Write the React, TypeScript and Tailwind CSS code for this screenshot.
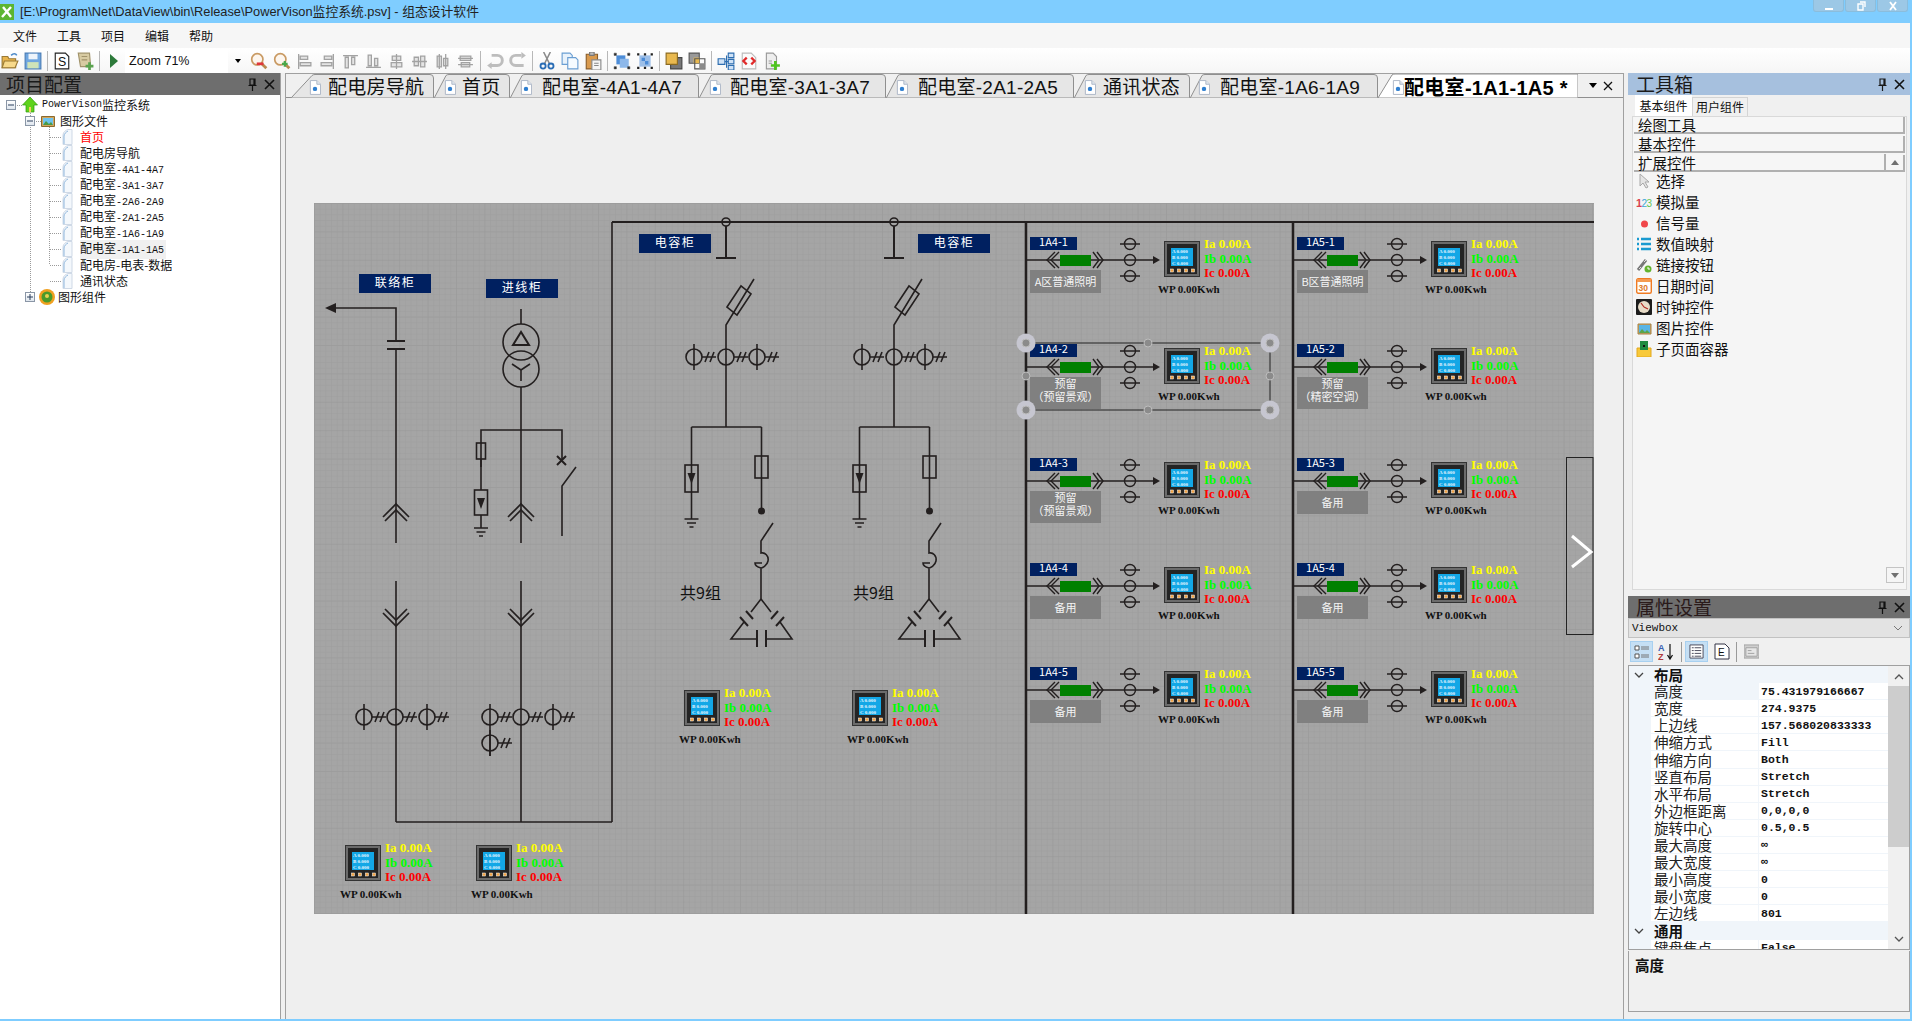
import type { ReactNode } from "react";

const tabs = [
  { name: "配电房导航", w: 143, icon: 18, text: 37, slant: 15 },
  { name: "首页", w: 76, icon: 10, text: 28, slant: 6 },
  { name: "配电室-4A1-4A7", w: 189, icon: 10, text: 32, slant: 6 },
  { name: "配电室-3A1-3A7", w: 187, icon: 10, text: 31, slant: 6 },
  { name: "配电室-2A1-2A5", w: 188, icon: 10, text: 32, slant: 6 },
  { name: "通讯状态", w: 116, icon: 10, text: 29, slant: 6 },
  { name: "配电室-1A6-1A9", w: 188, icon: 8, text: 30, slant: 6 },
];

const leaves = [
  { cn: "首页", en: "", red: true },
  { cn: "配电房导航", en: "" },
  { cn: "配电室", en: "-4A1-4A7" },
  { cn: "配电室", en: "-3A1-3A7" },
  { cn: "配电室", en: "-2A6-2A9" },
  { cn: "配电室", en: "-2A1-2A5" },
  { cn: "配电室", en: "-1A6-1A9" },
  { cn: "配电室", en: "-1A1-1A5", active: true },
  { cn: "配电房-电表-数据", en: "" },
  { cn: "通讯状态", en: "" },
];

const props1 = [
  ["高度", "75.431979166667"],
  ["宽度", "274.9375"],
  ["上边线", "157.568020833333"],
  ["伸缩方式", "Fill"],
  ["伸缩方向", "Both"],
  ["竖直布局", "Stretch"],
  ["水平布局", "Stretch"],
  ["外边框距离", "0,0,0,0"],
  ["旋转中心", "0.5,0.5"],
  ["最大高度", "∞"],
  ["最大宽度", "∞"],
  ["最小高度", "0"],
  ["最小宽度", "0"],
  ["左边线", "801"],
];

const ink = "#231f1f";
const cjk = "'Noto Sans CJK SC', sans-serif";
const serif = "'Liberation Serif', serif";

// ---------- small bitmap-like icons ----------
const Ico = ({ children, size = 18 }: { children: ReactNode; size?: number }) => (
  <svg width={size} height={size} viewBox="0 0 16 16" className="shrink-0">
    {children}
  </svg>
);

const Slot = ({ children }: { children: ReactNode }) => (
  <div className="flex h-[24px] w-[23px] items-center justify-center">{children}</div>
);

const Sep = () => (
  <div className="flex h-[24px] w-[6px] items-center justify-center">
    <div className="h-[20px] w-px bg-[#b8b8b8]" />
  </div>
);

const Magnifier = ({ plus }: { plus?: boolean }) => (
  <Ico>
    <circle cx="6.5" cy="6.5" r="5" fill="#fdf6ee" stroke="#c99a63" strokeWidth="1.5" />
    <path d="M10 10l4.5 4.5" stroke="#b98a50" strokeWidth="2.5" />
    {plus ? (
      <path d="M8 10.5h5M10.5 8v5" stroke="#4aa84a" strokeWidth="2" />
    ) : (
      <path d="M6 10.5h6" stroke="#e0363b" strokeWidth="2.4" />
    )}
  </Ico>
);

const alignShapes = [
  "M2.5 1v14M4 3h7v3H4zM4 9h10v3H4z",
  "M13.5 1v14M5 3h7v3H5zM2 9h10v3H2z",
  "M1 2.5h14M3 4h3v10H3zM9 4h3v7H9z",
  "M1 13.5h14M3 2h3v10H3zM9 5h3v7H9z",
  "M8 1v14M4 3h8v4H4zM3 9h10v4H3z",
  "M1 8h14M3 4h4v8H3zM9 3h4v10H9z",
  "M5 1v14M11 1v14M3 3h4v10H3zM9 5h4v7H9z",
  "M1 5h14M1 11h14M3 3h10v4H3zM4 9h8v4H4z",
];

const AlignIcon = ({ d }: { d: string }) => (
  <Ico size={17}>
    <path d={d} fill="#e4e4e4" stroke="#a2a2a2" strokeWidth="1.2" />
  </Ico>
);

const PageIcon = ({ s = 16 }: { s?: number }) => (
  <svg width={s * 0.8} height={s} viewBox="0 0 13 16" className="shrink-0">
    <path d="M1.5.5h7l4 4v11h-11z" fill="#fff" stroke="#a9b4c4" />
    <path d="M8.5.5v4h4" fill="#dfe6ee" stroke="#a9b4c4" />
    <circle cx="6.5" cy="9.5" r="2.4" fill="#2f7fd0" />
  </svg>
);

const PinClose = ({ dark }: { dark?: boolean }) => (
  <div className="flex items-center gap-[6px] pr-[5px]">
    <svg width="11" height="13" viewBox="0 0 11 13">
      <path d="M3 1h5v6H3zM1.5 7.5h8M5.5 8v5M7 1v6" fill="none" stroke={dark ? "#111" : "#1a1a1a"} strokeWidth="1.2" />
    </svg>
    <svg width="11" height="11" viewBox="0 0 11 11">
      <path d="M1 1l9 9M10 1l-9 9" stroke="#111" strokeWidth="1.6" />
    </svg>
  </div>
);

const Toolbar = () => (
  <div className="flex h-[25px] items-center bg-gradient-to-b from-[#ffffff] to-[#f6f6f6] pt-[1px]">
    <div className="-ml-[2px] flex items-center">
      <Slot>
        <Ico>
          <path d="M1 4h5l1 2h6v8H1z" fill="#e9b44c" stroke="#9a7a35" />
          <path d="M3 8h12l-2.5 6H1z" fill="#f7d98b" stroke="#9a7a35" />
          <path d="M9 3c2-2 4-2 5 0" fill="none" stroke="#4a88c7" strokeWidth="1.4" />
        </Ico>
      </Slot>
      <Slot>
        <Ico>
          <path d="M1 1h14v14H1z" fill="#6fa6e0" stroke="#4b7db5" />
          <path d="M4 1.5h8v5H4z" fill="#eef4fb" />
          <path d="M3 9h10v5.500H3z" fill="#cfe4b8" />
        </Ico>
      </Slot>
      <Sep />
      <Slot>
        <Ico>
          <path d="M2 1h9l3 3v11H2z" fill="#fff" stroke="#222" />
          <text x="4.500" y="12.500" fontSize="11" fontFamily="'Liberation Sans'" fill="#111">S</text>
        </Ico>
      </Slot>
      <Slot>
        <Ico>
          <path d="M2 1h10l1 12H4z" fill="#d8cba2" stroke="#a1936b" />
          <path d="M5 4h5M5 7h5" stroke="#a1936b" />
          <path d="M8.500 12.500h7M12 9v7" stroke="#5ba34f" strokeWidth="2.400" />
        </Ico>
      </Slot>
      <Sep />
      <Slot>
        <svg width="9" height="14" viewBox="0 0 9 14">
          <path d="M1 0l8 7-8 7z" fill="#2d7a3a" />
        </svg>
      </Slot>
      <div className="flex h-[24px] w-[103px] items-center bg-white pl-[4px] font-['Liberation_Sans',sans-serif] text-[12.500px] text-[#111]">
        Zoom 71%
      </div>
      <div className="flex h-[24px] w-[19px] items-center justify-center">
        <div className="h-0 w-0 border-x-[3px] border-t-[4px] border-x-transparent border-t-black" />
      </div>
      <Slot><Magnifier /></Slot>
      <Slot><Magnifier plus /></Slot>
      {alignShapes.map((d) => (
        <Slot key={d}><AlignIcon d={d} /></Slot>
      ))}
      <Sep />
      <Slot>
        <Ico>
          <path d="M5 3h5a4 4 0 010 9H3" fill="none" stroke="#bdbdbd" strokeWidth="2.600" />
          <path d="M1 12l4-3v6z" fill="#bdbdbd" />
        </Ico>
      </Slot>
      <Slot>
        <Ico>
          <path d="M11 3H6a4 4 0 000 9h7" fill="none" stroke="#bdbdbd" strokeWidth="2.600" />
          <path d="M15 3l-4-3v6z" fill="#bdbdbd" />
        </Ico>
      </Slot>
      <Sep />
      <Slot>
        <Ico>
          <path d="M11 0L6 10M5 0l5 10" stroke="#8a8a8a" strokeWidth="1.400" />
          <circle cx="4.500" cy="12.500" r="2.300" fill="none" stroke="#2a6db5" strokeWidth="1.600" />
          <circle cx="11.500" cy="12.500" r="2.300" fill="none" stroke="#2a6db5" strokeWidth="1.600" />
        </Ico>
      </Slot>
      <Slot>
        <Ico>
          <path d="M1 1h7l2 2v8H1z" fill="#e8f2fb" stroke="#6a9ed2" />
          <path d="M6 5h7l2 2v8H6z" fill="#f6fbff" stroke="#6a9ed2" />
        </Ico>
      </Slot>
      <Slot>
        <Ico>
          <path d="M2 2h10v13H2z" fill="#d99a4e" stroke="#8b5e2a" />
          <path d="M5 0h4v3H5z" fill="#bdbdbd" stroke="#777" />
          <path d="M7 7h8v9H7z" fill="#f5f5f5" stroke="#888" />
          <path d="M9 10h4M9 12h4" stroke="#888" />
        </Ico>
      </Slot>
      <Sep />
      <Slot>
        <Ico>
          <path d="M3 3h8v8H3z" fill="#4d8dd8" />
          <path d="M6 6h8v8H6z" fill="#8db8ea" />
          <path d="M1 1h2v2H1zM13 1h2v2h-2zM1 13h2v2H1zM13 13h2v2h-2z" fill="#222" stroke="#555" strokeWidth=".5" />
        </Ico>
      </Slot>
      <Slot>
        <Ico>
          <path d="M3 3h10v10H3z" fill="#9dbfe8" />
          <path d="M5 5h3v3H5zM8 8h3v3H8z" fill="#4d8dd8" />
          <path d="M1 1h2v2H1zM13 1h2v2h-2zM1 13h2v2H1zM13 13h2v2h-2zM7 1h2v2H7zM7 13h2v2H7z" fill="#222" />
        </Ico>
      </Slot>
      <Sep />
      <Slot>
        <Ico>
          <path d="M5 5h10v10H5z" fill="#777" stroke="#444" />
          <path d="M1 1h10v10H1z" fill="#e9b94f" stroke="#8b6a20" />
        </Ico>
      </Slot>
      <Slot>
        <Ico>
          <path d="M1 1h9v9H1z" fill="#999" stroke="#555" />
          <path d="M5 5h5v5H5z" fill="#e9b94f" />
          <path d="M6 6h9v9H6z" fill="none" stroke="#555" />
          <path d="M10 10h5v5h-5z" fill="#8a8a8a" />
        </Ico>
      </Slot>
      <Sep />
      <Slot>
        <Ico>
          <path d="M1 6h6v5H1zM10 1h5v4h-5zM10 6.500h5v4h-5zM10 12h5v4h-5z" fill="#cfe2f6" stroke="#2d6db0" />
          <path d="M7 8.500h3M8.500 3v11" stroke="#2d6db0" fill="none" />
        </Ico>
      </Slot>
      <Slot>
        <Ico>
          <path d="M2 1h8l4 4v10H2z" fill="#fbfbfb" stroke="#bbb" />
          <path d="M6 5L3 8l3 3M10 5l3 3-3 3" fill="none" stroke="#e02a2a" strokeWidth="2" />
        </Ico>
      </Slot>
      <Slot>
        <Ico>
          <path d="M3 1h6l3 3v11H3z" fill="#eee" stroke="#999" />
          <path d="M5 8h3M5 10h3" stroke="#999" />
          <path d="M7 12h8M11 8v8" stroke="#4fc41e" strokeWidth="2.400" />
        </Ico>
      </Slot>
    </div>
  </div>
);

const TreeBox = ({ open }: { open?: boolean }) => (
  <div className="flex h-[10px] w-[10px] items-center justify-center border border-[#8a96a6] bg-gradient-to-b from-white to-[#dfe6ee]">
    <svg width="8" height="8" viewBox="0 0 8 8">
      <path d={open ? "M1 4h6" : "M1 4h6M4 1v6"} stroke="#2b3f5c" />
    </svg>
  </div>
);

const Tree = () => (
  <div className="relative pt-[2px] font-['Noto_Sans_CJK_SC',sans-serif] text-[12px] leading-[16px] text-[#111]">
    {/* tree guide lines */}
    <div className="absolute left-[30px] top-[16px] h-[185px] border-l border-dotted border-[#9a9a9a]" />
    <div className="absolute left-[49px] top-[32px] h-[137px] border-l border-dotted border-[#9a9a9a]" />

    <div className="relative flex h-[16px] items-center">
      <div className="ml-[6px]"><TreeBox open /></div>
      <div className="ml-[1px] w-[5px] border-t border-dotted border-[#9a9a9a]" />
      <svg width="16" height="16" viewBox="0 0 16 16">
        <path d="M8 0l7.500 8H12v7H4V8H.5z" fill="#5fd31c" stroke="#2f9a10" strokeWidth=".7" />
        <path d="M7 10h2v5H7z" fill="#f0d060" />
      </svg>
      <span className="ml-[4px] font-['Liberation_Mono',monospace] text-[10px]">PowerVison</span>
      <span>监控系统</span>
    </div>

    <div className="relative flex h-[16px] items-center">
      <div className="ml-[25px] bg-white"><TreeBox open /></div>
      <div className="ml-[1px] w-[5px] border-t border-dotted border-[#9a9a9a]" />
      <svg width="14" height="14" viewBox="0 0 14 14">
        <path d="M.5 2.500h13v10H.5z" fill="#d2a55c" stroke="#8b6a2f" />
        <path d="M2 4h10v7H2z" fill="#6ec3ef" />
        <path d="M2 11l3-4 3 3 2-2 2 3z" fill="#4b9a45" />
      </svg>
      <span className="ml-[5px]">图形文件</span>
    </div>

    {leaves.map((l) => (
      <div key={l.cn + l.en} className="relative flex h-[16px] items-center">
        <div className="ml-[50px] w-[11px] border-t border-dotted border-[#9a9a9a]" />
        <svg width="12" height="16" viewBox="0 0 12 16">
          <path d="M2 15.500V6c0-3 3-5 5-5.500h4v15z" fill="#f4f8fc" stroke="#cfd9e6" />
          <path d="M3 15V7c0-2 2-4 4-5" fill="none" stroke="#8fb6dc" />
        </svg>
        <div className={`ml-[7px] pr-[2px] ${l.active ? "bg-[#f0f0f0]" : ""} ${l.red ? "text-[#ff0000]" : ""}`}>
          {l.cn}
          {l.en ? <span className="font-['Liberation_Mono',monospace] text-[10px]">{l.en}</span> : null}
        </div>
      </div>
    ))}

    <div className="relative flex h-[16px] items-center">
      <div className="ml-[25px] bg-white"><TreeBox /></div>
      <svg width="18" height="18" viewBox="0 0 18 18" className="ml-[3px]">
        <circle cx="9" cy="9" r="8" fill="#f0a020" />
        <circle cx="9" cy="9" r="5.500" fill="#4a9a2a" />
        <circle cx="9" cy="8" r="2" fill="#e8d050" />
      </svg>
      <span className="ml-[2px]">图形组件</span>
    </div>
  </div>
);

const Tab = ({ name, w, icon, text, slant }: (typeof tabs)[number]) => (
  <div className="relative flex h-[24px] shrink-0 items-center" style={{ width: w }}>
    <svg className="absolute left-0 top-0" width={w + 1} height="24">
      <path
        d={`M0.5 23.500 L${slant + 6} 1.500 Q${slant + 7} 0.500 ${slant + 9} 0.500 H${w - 4} Q${w - 0.5} 0.500 ${w - 0.5} 4 V23.500`}
        fill="#e6e6e6"
        stroke="#8f8f8f"
      />
    </svg>
    <div className="relative flex translate-y-[2px] items-center" style={{ marginLeft: icon }}>
      <PageIcon s={15} />
      <span
        className="whitespace-nowrap font-['Liberation_Sans','Noto_Sans_CJK_SC',sans-serif] text-[19px] leading-[24px] tracking-[0.25px] text-[#111]"
        style={{ marginLeft: text - icon - 12 }}
      >
        {name}
      </span>
    </div>
  </div>
);

// ---------- diagram pieces, drawn in page coordinates ----------
const MeterBody = ({ x, y }: { x: number; y: number }) => (
  <g>
    <rect x={x + 0.5} y={y + 0.5} width="35" height="35" fill="#6b6b6b" stroke="#333" />
    <rect x={x + 3} y={y + 3} width="30" height="30" fill="#242424" />
    <rect x={x + 7} y={y + 7} width="22" height="18" fill="#13a7e6" />
    {["A 0.000", "B 0.000", "C 0.000"].map((t, i) => (
      <text key={t} x={x + 8} y={y + 12 + i * 6} fontSize="5" fill="#e6f6ff" fontFamily={serif}>
        {t}
      </text>
    ))}
    {[8, 15, 22, 29].map((d) => (
      <rect key={d} x={x + d - 1.5} y={y + 28} width="3" height="3" fill="#f0a040" stroke="#fff" strokeWidth=".5" />
    ))}
  </g>
);

const Meter = ({ x, y, wx, wy }: { x: number; y: number; wx: number; wy: number }) => (
  <g fontFamily={serif} fontWeight="700">
    <MeterBody x={x} y={y} />
    <text x={x + 40} y={y + 7} fontSize="13" fill="#ffff00">Ia 0.00A</text>
    <text x={x + 40} y={y + 22} fontSize="13" fill="#00ff00">Ib 0.00A</text>
    <text x={x + 40} y={y + 36} fontSize="13" fill="#ff0000">Ic 0.00A</text>
    <text x={wx} y={wy} fontSize="11" fill="#111">WP 0.00Kwh</text>
  </g>
);

const Navy = ({ x, y, w, h, label, size = 12, spacing = 1.5 }: { x: number; y: number; w: number; h: number; label: string; size?: number; spacing?: number }) => (
  <g>
    <rect x={x} y={y} width={w} height={h} fill="#002060" />
    <text x={x + w / 2} y={y + h / 2 + size * 0.34 - 1} fontSize={size} letterSpacing={spacing} fill="#fff" textAnchor="middle" fontFamily={cjk}>
      {label}
    </text>
  </g>
);

const Chevrons = ({ x, y, up }: { x: number; y: number; up?: boolean }) => {
  const s = up ? 1 : -1;
  return (
    <g fill="none" stroke={ink} strokeWidth="1.700">
      <path d={`M${x - 13} ${y + 13 * s} L${x} ${y} L${x + 13} ${y + 13 * s}`} />
      <path d={`M${x - 11} ${y + 17 * s} L${x} ${y + 6 * s} L${x + 11} ${y + 17 * s}`} />
    </g>
  );
};

const Ct = ({ x, y, vert }: { x: number; y: number; vert?: boolean }) => (
  <g fill="none" stroke={ink} strokeWidth="1.600">
    <circle cx={x} cy={y} r="8" />
    {vert ? <path d={`M${x} ${y - 13} V${y + 13}`} /> : null}
    <path d={`M${x + 8} ${y} H${x + 22} M${x + 11} ${y + 5} L${x + 15} ${y - 5} M${x + 16} ${y + 5} L${x + 20} ${y - 5}`} />
  </g>
);

const Ground = ({ x, y }: { x: number; y: number }) => (
  <path d={`M${x - 7} ${y} H${x + 7} M${x - 4.500} ${y + 4} H${x + 4.500} M${x - 2} ${y + 8} H${x + 2}`} stroke={ink} strokeWidth="1.500" fill="none" />
);

const Arrester = ({ x, y, h = 25 }: { x: number; y: number; h?: number }) => (
  <g>
    <rect x={x - 6.500} y={y} width="13" height={h} fill="none" stroke={ink} strokeWidth="1.600" />
    <path d={`M${x - 4} ${y + 8} H${x + 4} L${x} ${y + 19} Z`} fill={ink} />
  </g>
);

const CapBank = ({ dx }: { dx: number }) => (
  <g transform={`translate(${dx} 0)`}>
    <Navy x={639 + (dx ? 111 : 0)} y={234} w={72} h={19} label="电容柜" />
    <g fill="none" stroke={ink} strokeWidth="1.600">
      <circle cx="726" cy="222" r="4" />
      <path d="M726 226V258M716 258H736" strokeWidth="2" />
      <path d="M754 279L726 325V427" />
      <path d="M728 308L742 287L752 295L738 316Z" transform="translate(-1 -1)" />
      <path d="M691.500 427H761.500" />
      <path d="M691.500 427V519M761.500 427V511" />
      <rect x="755" y="456" width="13" height="22" />
    </g>
    <Arrester x={691.500} y={465} h={27} />
    <Ground x={691.500} y={519} />
    <circle cx="761.500" cy="511" r="3.500" fill={ink} />
    <Ct x={694} y={357} vert />
    <Ct x={726} y={357} />
    <Ct x={757} y={357} vert />
    <g fill="none" stroke={ink} strokeWidth="1.600">
      <path d="M773 523L761 541V553C765 552 769 556 768 561C767 566 762 568 761 568C757 567 755 566 755 563H762M761 568V599" />
      <path d="M761 599L751 612M761 599L771 612" />
      <path d="M746 611L753 619M771 619L778 611" strokeWidth="2" />
      <path d="M740 617L748 626M776 626L784 617" strokeWidth="2" />
      <path d="M744 622L731 639H757M767 639H792L780 622" />
      <path d="M757 630V647M766 630V647" strokeWidth="2" />
    </g>
    <text x={dx ? 685 : 680} y="599" fontSize="16" fill="#111" fontFamily={cjk}>共9组</text>
    <Meter x={684} y={690} wx={679} wy={743} />
  </g>
);

const Feeder = ({ x, y, code, lines }: { x: number; y: number; code: string; lines: string[] }) => (
  <g>
    <Navy x={x} y={y - 23} w={47} h={13} label={code} size={11} spacing={0} />
    <path d={`M${x - 4} ${y}H${x + 123}`} stroke={ink} strokeWidth="1.600" />
    <path d={`M${x + 123} ${y - 4}L${x + 130} ${y}L${x + 123} ${y + 4}Z`} fill={ink} />
    <g fill="none" stroke={ink} strokeWidth="1.400">
      <path d={`M${x + 25} ${y - 8}L${x + 17} ${y}L${x + 25} ${y + 8}M${x + 29} ${y - 8}L${x + 21} ${y}L${x + 29} ${y + 8}`} />
      <path d={`M${x + 63} ${y - 8}L${x + 69} ${y}L${x + 63} ${y + 8}M${x + 67} ${y - 8}L${x + 73} ${y}L${x + 67} ${y + 8}`} />
      <circle cx={x + 100} cy={y - 16} r="5.500" />
      <circle cx={x + 100} cy={y} r="5.500" />
      <circle cx={x + 100} cy={y + 16} r="5.500" />
      <path d={`M${x + 90} ${y - 16}H${x + 110}M${x + 90} ${y + 16}H${x + 110}`} />
    </g>
    <rect x={x + 30} y={y - 5} width="31" height="11" fill="#008000" />
    <rect x={x} y={y + 10} width="71" height={lines.length > 1 ? 32 : 23} fill="#808080" />
    {lines.map((t, i) => (
      <text
        key={t}
        x={x + 35.500}
        y={y + (lines.length > 1 ? 21 + i * 13 : 26)}
        fontSize="11"
        fill="#f4f4f4"
        textAnchor="middle"
        fontFamily={cjk}
      >
        {t}
      </text>
    ))}
    <Meter x={x + 134} y={y - 19} wx={x + 128} wy={y + 33} />
  </g>
);

const Handle = ({ x, y, big }: { x: number; y: number; big?: boolean }) => (
  <g>
    {big ? <circle cx={x} cy={y} r="9.500" fill="#c6c6d0" /> : null}
    <circle cx={x} cy={y} r="4" fill="#8b8b8b" stroke="#bdbdbd" />
  </g>
);

const a4 = [
  { y: 260, lines: ["A区普通照明"] },
  { y: 367, lines: ["预留", "（预留景观）"] },
  { y: 481, lines: ["预留", "（预留景观）"] },
  { y: 586, lines: ["备用"] },
  { y: 690, lines: ["备用"] },
];
const a5 = [
  { y: 260, lines: ["B区普通照明"] },
  { y: 367, lines: ["预留", "（精密空调）"] },
  { y: 481, lines: ["备用"] },
  { y: 586, lines: ["备用"] },
  { y: 690, lines: ["备用"] },
];

const Diagram = () => (
  <svg width="1280" height="711" viewBox="314 203 1280 711" className="block">
    <defs>
      <pattern id="fine" x="314" y="203" width="5.680" height="5.680" patternUnits="userSpaceOnUse">
        <path d="M5.680 0H0V5.680" fill="none" stroke="#9b9b9b" strokeWidth=".8" />
      </pattern>
      <pattern id="coarse" x="314" y="203" width="28.400" height="28.400" patternUnits="userSpaceOnUse">
        <path d="M28.400 0H0V28.400" fill="none" stroke="#979797" strokeWidth=".8" />
      </pattern>
    </defs>
    <rect x="314" y="203" width="1280" height="711" fill="#a5a5a5" />
    <rect x="314" y="203" width="1280" height="711" fill="url(#fine)" />
    <rect x="314" y="203" width="1280" height="711" fill="url(#coarse)" />

    {/* incoming and tie cabinets */}
    <Navy x={359} y={274} w={72} h={19} label="联络柜" />
    <Navy x={486} y={279} w={72} h={19} label="进线柜" />
    <g fill="none" stroke={ink} strokeWidth="1.600">
      <path d="M336 308H396V341M396 349V543" />
      <path d="M387 341H405M387 349H405" strokeWidth="2" />
      <path d="M521 309V324M521 387V543" />
      <circle cx="521" cy="342" r="18" />
      <circle cx="521" cy="369" r="18" />
      <path d="M521 332L513 345H529Z" strokeWidth="2" />
      <path d="M512 364L521 370L530 364M521 370V381" />
      <path d="M481 467V430H562V460" />
      <rect x="476.500" y="443" width="9" height="16" />
      <path d="M481 459V490M481 515V528" />
      <path d="M557 456L566 465M566 456L557 465" strokeWidth="2" />
      <path d="M576 467L562 486V536" />
      <path d="M396 581V822M521 581V822M396 822H612M612 222V822" />
      <path d="M612 222H1594" strokeWidth="2" />
    </g>
    <path d="M325 308L336 303V313Z" fill={ink} />
    <Arrester x={481} y={490} />
    <Ground x={481} y={528} />
    <Chevrons x={396} y={504} up />
    <Chevrons x={521} y={504} up />
    <Chevrons x={396} y={626} />
    <Chevrons x={521} y={626} />
    <Ct x={364} y={717} vert />
    <Ct x={395} y={717} />
    <Ct x={427} y={717} vert />
    <Ct x={490} y={717} vert />
    <Ct x={521} y={717} />
    <Ct x={553} y={717} vert />
    <path d="M490 730V756" stroke={ink} strokeWidth="1.600" />
    <Ct x={490} y={743} vert />
    <Meter x={345} y={845} wx={340} wy={898} />
    <Meter x={476} y={845} wx={471} wy={898} />

    {/* capacitor cabinets */}
    <CapBank dx={0} />
    <CapBank dx={168} />

    {/* outgoing feeders */}
    <path d="M1026 222V914M1293 222V914" stroke={ink} strokeWidth="2.500" />
    {a4.map((r, i) => (
      <Feeder key={r.y} x={1030} y={r.y} code={`1A4-${i + 1}`} lines={r.lines} />
    ))}
    {a5.map((r, i) => (
      <Feeder key={r.y} x={1297} y={r.y} code={`1A5-${i + 1}`} lines={r.lines} />
    ))}

    {/* selection frame on 1A4-2 */}
    <rect x="1026" y="343" width="244" height="67" fill="none" stroke="#222" strokeWidth="1" />
    <Handle x={1026} y={343} big />
    <Handle x={1270} y={343} big />
    <Handle x={1026} y={410} big />
    <Handle x={1270} y={410} big />
    <Handle x={1148} y={343} />
    <Handle x={1148} y={410} />
    <Handle x={1026} y={376} />
    <Handle x={1270} y={376} />

    {/* next page button */}
    <rect x="1566.500" y="457.500" width="26.500" height="177" fill="none" stroke="#222" />
    <path d="M1572 536L1591 552L1572 567" fill="none" stroke="#fff" strokeWidth="3" />
  </svg>
);

const toolItems: { t: string; icon: ReactNode }[] = [
  {
    t: "选择",
    icon: (
      <Ico size={16}>
        <path d="M4 1v12l3-3 3 5 2-1-3-5h4z" fill="#e4e4e4" stroke="#a8a8a8" />
      </Ico>
    ),
  },
  {
    t: "模拟量",
    icon: (
      <svg width="16" height="16" viewBox="0 0 16 16">
        <text x="0" y="13" fontSize="11" fontWeight="700" fontFamily="'Liberation Sans'" fill="#d9434e">1</text>
        <text x="5.500" y="13" fontSize="10" fontFamily="'Liberation Sans'" fill="#3ca6d8">2</text>
        <text x="10.500" y="13" fontSize="10" fontFamily="'Liberation Sans'" fill="#63c454">3</text>
      </svg>
    ),
  },
  {
    t: "信号量",
    icon: (
      <Ico size={16}>
        <circle cx="8.500" cy="9" r="3.500" fill="#f0474a" />
      </Ico>
    ),
  },
  {
    t: "数值映射",
    icon: (
      <Ico size={16}>
        <path d="M1 3h2M5 3h10M1 8h2M5 8h10M1 13h2M5 13h10" stroke="#1a9ad0" strokeWidth="2.400" />
      </Ico>
    ),
  },
  {
    t: "链接按钮",
    icon: (
      <Ico size={16}>
        <path d="M2 13L10 3" stroke="#777" strokeWidth="3" />
        <path d="M3 12l2-2M8 5l2-2" stroke="#ddd" strokeWidth="1" />
        <circle cx="12" cy="12" r="3.500" fill="#63b32e" />
        <path d="M12 10v2h2" stroke="#fff" fill="none" />
      </Ico>
    ),
  },
  {
    t: "日期时间",
    icon: (
      <svg width="16" height="16" viewBox="0 0 16 16">
        <rect x=".7" y=".7" width="14.600" height="14.600" rx="1.500" fill="#fff" stroke="#f07a22" strokeWidth="1.400" />
        <rect x="1" y="1" width="14" height="3" fill="#f59a50" />
        <text x="2.500" y="13" fontSize="8.500" fontWeight="700" fontFamily="'Liberation Sans'" fill="#e07a2a">30</text>
      </svg>
    ),
  },
  {
    t: "时钟控件",
    icon: (
      <Ico size={16}>
        <rect width="16" height="16" rx="1" fill="#1d1d1d" />
        <circle cx="8" cy="8" r="6" fill="#e8dcc8" />
        <path d="M8 8L5 4M8 8l4 2" stroke="#b02a20" strokeWidth="1.200" />
      </Ico>
    ),
  },
  {
    t: "图片控件",
    icon: (
      <Ico size={16}>
        <path d="M2 4h13v10H2z" fill="#c9a265" stroke="#a58347" />
        <path d="M3 5h11v8H3z" fill="#5bb5e5" />
        <path d="M3 13l3-4 3 3 2-2 3 3z" fill="#5aa54a" />
      </Ico>
    ),
  },
  {
    t: "子页面容器",
    icon: (
      <Ico size={16}>
        <path d="M1 7h14v9H1z" fill="#f8c93a" stroke="#e3a81e" />
        <path d="M4 0h8v9H4z" fill="#1f8a3f" />
        <path d="M7 4h2v2H7z" fill="#111" />
      </Ico>
    ),
  },
];

const Accordion = ({ label, arrow }: { label: string; arrow?: boolean }) => (
  <div className="mb-[2px] flex h-[17px] items-center justify-between border-b-2 border-r-2 border-[#b0b0b0] bg-[#f6f6f6] pl-[4px] text-[14.500px] leading-[15px] text-[#111]">
    <span>{label}</span>
    {arrow ? (
      <div className="flex h-[17px] w-[19px] items-center justify-center border-l-2 border-[#b0b0b0]">
        <div className="h-0 w-0 border-x-[4px] border-b-[5px] border-x-transparent border-b-[#707070]" />
      </div>
    ) : null}
  </div>
);

const Toolbox = () => (
  <div className="flex flex-col font-['Noto_Sans_CJK_SC',sans-serif]">
    <div className="flex h-[22px] items-center justify-between bg-[#a6c0de]">
      <span className="pl-[8px] text-[19px] leading-[22px] text-[#1b1b1b]">工具箱</span>
      <PinClose />
    </div>
    <div className="flex h-[21px] items-end pl-[7px] text-[12px] leading-[18px] text-[#111]">
      <div className="flex h-[21px] w-[57px] items-center justify-center bg-white">基本组件</div>
      <div className="flex h-[19px] w-[56px] items-center justify-center border border-b-0 border-[#d4d4d4] bg-[#f0f0f0]">用户组件</div>
    </div>
    <div className="relative ml-[4px] h-[474px] w-[275px] border border-[#d9d9d9] bg-[#f5f5f5] px-[1px]">
      <Accordion label="绘图工具" />
      <Accordion label="基本控件" />
      <Accordion label="扩展控件" arrow />
      <div className="-mt-[3px]">
        {toolItems.map((it) => (
          <div key={it.t} className="flex h-[20.900px] items-center pl-[2px] text-[14.500px] leading-[20px] text-[#111]">
            <div className="flex w-[16px] justify-center">{it.icon}</div>
            <span className="ml-[4px]">{it.t}</span>
          </div>
        ))}
      </div>
      <div className="absolute bottom-[6px] right-[2px] flex h-[16px] w-[18px] items-center justify-center border border-[#c4c4c4]">
        <div className="h-0 w-0 border-x-[4px] border-t-[5px] border-x-transparent border-t-[#707070]" />
      </div>
    </div>
  </div>
);

const PropRow = ({ name, value, first }: { name: string; value: string; first?: boolean }) => (
  <div className="flex h-[17.100px] bg-white">
    <div className="w-[22px] shrink-0 bg-[#f0f5fa]" />
    <div className={`flex w-[108px] shrink-0 items-center border-b border-r border-[#f0f5fa] pl-[3px] text-[14.500px] leading-[16px] text-[#222] ${first ? "bg-[#f0f5fa]" : ""}`}>
      {name}
    </div>
    <div className="flex flex-1 items-center border-b border-[#f0f5fa] pl-[2px] font-['Liberation_Mono',monospace] text-[11.500px] font-bold text-[#111]">
      {value}
    </div>
  </div>
);

const CategoryRow = ({ name }: { name: string }) => (
  <div className="flex h-[17.100px] items-center bg-[#f0f5fa]">
    <svg width="22" height="10" viewBox="0 0 22 10" className="shrink-0">
      <path d="M6 3l4 4 4-4" fill="none" stroke="#444" strokeWidth="1.300" />
    </svg>
    <span className="pl-[3px] text-[14.500px] font-bold leading-[16px] text-[#111]">{name}</span>
  </div>
);

const PropTool = ({ on, children }: { on?: boolean; children: ReactNode }) => (
  <div className={`flex h-[21px] w-[23px] items-center justify-center ${on ? "border border-[#a8d0f0] bg-[#c5dff4]" : ""}`}>{children}</div>
);

const Properties = () => (
  <div className="flex flex-col font-['Noto_Sans_CJK_SC',sans-serif]">
    <div className="flex h-[22px] items-center justify-between bg-[#6e6e6e]">
      <span className="pl-[8px] text-[19px] leading-[22px] text-[#2a1a1a]">属性设置</span>
      <PinClose dark />
    </div>
    <div className="flex h-[20px] items-center justify-between border border-[#c2c2c2] bg-[#e3e3e3] pl-[3px] pr-[6px]">
      <span className="font-['Liberation_Mono',monospace] text-[11px] text-[#111]">Viewbox</span>
      <svg width="10" height="6" viewBox="0 0 10 6">
        <path d="M1 1l4 4 4-4" fill="none" stroke="#777" />
      </svg>
    </div>
    <div className="flex h-[27px] items-center gap-[2px] pl-[2px]">
      <PropTool on>
        <Ico size={16}>
          <path d="M1 2h4v4H1zM1 10h4v4H1z" fill="#fff" stroke="#555" />
          <path d="M7 3h8M7 5h8M7 11h8M7 13h8" stroke="#777" />
        </Ico>
      </PropTool>
      <PropTool>
        <svg width="17" height="18" viewBox="0 0 17 18">
          <text x="0" y="8" fontSize="9" fontWeight="700" fontFamily="'Liberation Sans'" fill="#3a5fb0">A</text>
          <text x="0" y="17" fontSize="9" fontWeight="700" fontFamily="'Liberation Sans'" fill="#b03a3a">Z</text>
          <path d="M12 1v14M9.500 12l2.500 4 2.500-4" fill="none" stroke="#111" strokeWidth="1.200" />
        </svg>
      </PropTool>
      <div className="mx-[1px] h-[20px] w-px bg-[#9a9a9a]" />
      <PropTool on>
        <Ico size={15}>
          <path d="M1 1h14v14H1z" fill="#fff" stroke="#445" />
          <path d="M3 4h2M6 4h7M3 7h2M6 7h7M3 10h2M6 10h7M3 13h2M6 13h7" stroke="#445" />
        </Ico>
      </PropTool>
      <PropTool>
        <svg width="16" height="17" viewBox="0 0 16 17">
          <path d="M1 1h10l4 4v11H1z" fill="#fff" stroke="#334" />
          <text x="4" y="13" fontSize="10" fontFamily="'Liberation Sans'" fill="#111">E</text>
        </svg>
      </PropTool>
      <div className="mx-[1px] h-[20px] w-px bg-[#9a9a9a]" />
      <PropTool>
        <Ico size={15}>
          <path d="M0 1h16v14H0z" fill="#cfcfcf" stroke="#a0a0a0" />
          <path d="M2 4h12v9H2z" fill="#e6e6e6" stroke="#a0a0a0" />
          <path d="M4 7h4M4 10h7" stroke="#a0a0a0" />
        </Ico>
      </PropTool>
    </div>
    <div className="flex h-[285px] border border-[#a0a0a0] bg-white">
      <div className="flex-1 overflow-hidden">
        <CategoryRow name="布局" />
        {props1.map(([n, v], i) => (
          <PropRow key={n} name={n} value={v} first={i === 0} />
        ))}
        <CategoryRow name="通用" />
        <PropRow name="键盘焦点" value="False" />
      </div>
      <div className="flex w-[21px] shrink-0 flex-col bg-[#f0f0f0]">
        <div className="flex h-[20px] items-center justify-center">
          <svg width="10" height="7" viewBox="0 0 10 7">
            <path d="M1 6l4-4 4 4" fill="none" stroke="#555" strokeWidth="1.300" />
          </svg>
        </div>
        <div className="h-[161px] bg-[#cdcdcd]" />
        <div className="flex-1" />
        <div className="flex h-[20px] items-center justify-center">
          <svg width="10" height="7" viewBox="0 0 10 7">
            <path d="M1 1l4 4 4-4" fill="none" stroke="#555" strokeWidth="1.300" />
          </svg>
        </div>
      </div>
    </div>
    <div className="mt-[1px] h-[61px] border border-t-0 border-[#a0a0a0] bg-[#f0f0f0] pl-[6px] pt-[4px] text-[14.500px] font-bold leading-[20px] text-[#111]">
      高度
    </div>
  </div>
);

export default function App() {
  return (
    <div className="flex h-[1021px] w-[1912px] flex-col overflow-hidden border-b-2 border-r-2 border-[#7fcdff] bg-[#f0f0f0] font-['Noto_Sans_CJK_SC',sans-serif]">
      {/* title bar */}
      <div className="flex h-[23px] shrink-0 items-start justify-between bg-[#7fcdff]">
        <div className="flex h-[23px] items-center">
          <svg width="14" height="16" viewBox="0 0 14 16">
            <rect width="14" height="16" fill="#5cb531" />
            <path d="M2 13L11 3M3 3l8 10" stroke="#fff" strokeWidth="2.400" />
          </svg>
          <span className="ml-[6px] whitespace-nowrap font-['Liberation_Sans','Noto_Sans_CJK_SC',sans-serif] text-[12.800px] text-[#222]">
            [E:\Program\Net\DataView\bin\Release\PowerVison监控系统.psv] - 组态设计软件
          </span>
        </div>
        <div className="flex gap-[1px] pr-[2px]">
          {["min", "max", "close"].map((b) => (
            <div key={b} className="flex h-[12px] w-[31px] items-center justify-center rounded-b-[3px] border border-t-0 border-[#8bbddc] bg-[#9cc8e6]">
              <svg width="12" height="10" viewBox="0 0 12 10">
                {b === "min" ? <path d="M2 8h8" stroke="#fff" strokeWidth="2" /> : null}
                {b === "max" ? <path d="M3 3h5v6H3zM5 1h5v5" fill="none" stroke="#fff" strokeWidth="1.400" /> : null}
                {b === "close" ? <path d="M3 1l6 8M9 1L3 9" stroke="#fff" strokeWidth="1.800" /> : null}
              </svg>
            </div>
          ))}
        </div>
      </div>

      {/* menu */}
      <div className="flex h-[25px] shrink-0 items-center gap-[20px] bg-[#f6f6f6] pl-[13px] text-[12px] text-[#111]">
        <span>文件</span>
        <span>工具</span>
        <span>项目</span>
        <span>编辑</span>
        <span>帮助</span>
      </div>

      <Toolbar />

      <div className="flex min-h-0 flex-1">
        {/* project panel */}
        <div className="w-[281px] shrink-0 border-r border-[#a0a0a0] bg-white">
          <div className="flex h-[22px] items-center justify-between bg-[#6e6e6e]">
            <span className="pl-[6px] text-[19px] leading-[22px] text-[#1a1a1a]">项目配置</span>
            <PinClose dark />
          </div>
          <Tree />
        </div>

        {/* document area */}
        <div className="ml-[4px] flex w-[1339px] shrink-0 flex-col border-l border-r border-[#a0a0a0]">
          <div className="flex h-[24px] items-center border-t border-[#a0a0a0] pl-[5px]">
            {tabs.map((t) => (
              <Tab key={t.name} {...t} />
            ))}
            <div className="relative flex h-[24px] w-[200px] shrink-0 items-center pl-[14px]">
              <svg className="absolute left-0 top-0" width="200" height="24">
                <path d="M0 24L14 1Q15 0 17 0H200V24Z" fill="#fff" stroke="#8f8f8f" />
              </svg>
              <div className="relative flex translate-y-[2px] items-center">
                <PageIcon s={15} />
                <span className="whitespace-nowrap font-['Liberation_Sans','Noto_Sans_CJK_SC',sans-serif] text-[20px] font-bold leading-[24px] tracking-[0.3px] text-black">
                  配电室-1A1-1A5 *
                </span>
              </div>
            </div>
            <div className="ml-[11px] h-0 w-0 border-x-[4px] border-t-[5px] border-x-transparent border-t-black" />
            <svg width="10" height="10" viewBox="0 0 10 10" className="ml-[6px]">
              <path d="M1 1l8 8M9 1L1 9" stroke="#111" strokeWidth="1.300" />
            </svg>
          </div>
          <div className="flex-1 border-t border-[#8f8f8f] bg-[#efefef] pl-[28px] pt-[105px]">
            <Diagram />
          </div>
        </div>

        {/* right column */}
        <div className="ml-[4px] flex w-[282px] shrink-0 flex-col">
          <Toolbox />
          <div className="h-[6px]" />
          <Properties />
        </div>
      </div>
    </div>
  );
}
